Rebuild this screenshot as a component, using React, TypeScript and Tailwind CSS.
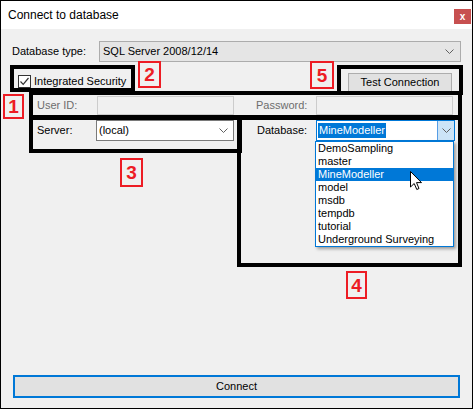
import React from 'react';

const Chevron = () => (
  <svg width="9" height="5" viewBox="0 0 9 5" className="shrink-0">
    <path d="M0.5 0.5 L4.5 4.5 L8.5 0.5" fill="none" stroke="#606060" strokeWidth="1" />
  </svg>
);

const databases = [
  'DemoSampling',
  'master',
  'MineModeller',
  'model',
  'msdb',
  'tempdb',
  'tutorial',
  'Underground Surveying',
];

// annotation overlays drawn over the dialog
const boxes = [
  'left-[9px] top-[64px] w-[125px] h-[27px]',
  'left-[28px] top-[90px] w-[433px] h-[29px]',
  'left-[28px] top-[114px] w-[213px] h-[38px]',
  'left-[236px] top-[114px] w-[225px] h-[152px]',
  'left-[336px] top-[64px] w-[126px] h-[30px]',
];

const labels = [
  { n: '1', pos: 'left-[2px] top-[93px] w-[21px] h-[25px]' },
  { n: '2', pos: 'left-[137px] top-[60px] w-[23px] h-[27px]' },
  { n: '3', pos: 'left-[119px] top-[157px] w-[23px] h-[29px]' },
  { n: '4', pos: 'left-[345px] top-[270px] w-[21px] h-[28px]' },
  { n: '5', pos: 'left-[309px] top-[60px] w-[24px] h-[28px]' },
];

export default function App() {
  return (
    <div className="relative w-[473px] h-[409px] border border-black bg-[#f0f0f0] flex flex-col text-[11px] text-black font-['Liberation_Sans',Arial,sans-serif] overflow-hidden">
      {/* title bar */}
      <div className="h-[28px] bg-white flex items-start justify-between pl-[7px] shrink-0">
        <span className="text-[12px] leading-[14px] mt-[7px]">Connect to database</span>
        <div className="mt-[8px] mr-[1px] w-[17px] h-[15px] bg-[#c75050] text-white flex items-center justify-center text-[10px] font-bold leading-none">
          x
        </div>
      </div>

      <div className="px-[11px] flex flex-col flex-1">
        {/* database type */}
        <div className="mt-[12px] h-[21px] flex items-center">
          <span className="w-[87px] shrink-0">Database type:</span>
          <div className="flex-1 h-[21px] bg-[#e5e5e5] border border-[#acacac] flex items-center justify-between pl-[3px] pr-[6px]">
            <span>SQL Server 2008/12/14</span>
            <Chevron />
          </div>
        </div>

        {/* integrated security / test connection */}
        <div className="mt-[8px] h-[23px] flex items-start">
          <div className="mt-[5px] ml-[6px] flex items-center gap-[3px]">
            <div className="w-[13px] h-[13px] border border-[#333] bg-white flex items-center justify-center">
              <svg width="11" height="11" viewBox="0 0 11 11">
                <path d="M1.5 5.5 L4.2 8.3 L9.5 2" fill="none" stroke="#333" strokeWidth="1.2" />
              </svg>
            </div>
            <span className="leading-[12px] -mt-[1px]">Integrated Security</span>
          </div>
          <div className="ml-auto mr-[9px] mt-[3px] w-[104px] h-[19px] bg-[#e1e1e1] border border-[#adadad] flex items-center justify-center">
            Test Connection
          </div>
        </div>

        {/* credentials + server/database */}
        <div className="mt-[2px] pl-[25px] grid grid-cols-[59px_138px_22px_60px_139px] grid-rows-[20px_21px] gap-y-[5px] items-center">
          <span className="text-[#6d6d6d]">User ID:</span>
          <div className="ml-[1px] w-[137px] h-[19px] border border-[#cccccc] bg-[#f0f0f0]" />
          <span />
          <span className="text-[#6d6d6d]">Password:</span>
          <div className="w-[137px] h-[19px] border border-[#cccccc] bg-[#f0f0f0]" />

          <span>Server:</span>
          <div className="h-[21px] bg-white border border-[#7a7a7a] flex items-center justify-between pl-[2px] pr-[5px]">
            <span>(local)</span>
            <Chevron />
          </div>
          <span />
          <span className="pl-[1px]">Database:</span>
          <div className="h-[21px] bg-white border border-[#0078d7] flex items-stretch justify-between">
            <div className="flex items-center pl-[1px]">
              <span className="bg-[#0078d7] text-white leading-[15px] px-[1px]">MineModeller</span>
            </div>
            <div className="w-[17px] bg-[#cce4f7] border-l border-[#569de5] flex items-center justify-center">
              <Chevron />
            </div>
          </div>
        </div>

        <div className="flex-1" />

        <div className="mx-[1px] mb-[10px] h-[23px] bg-[#e1e1e1] border-2 border-[#0078d7] flex items-center justify-center">
          Connect
        </div>
      </div>

      {/* open dropdown list */}
      <div className="absolute left-[314px] top-[140px] w-[139px] h-[106px] bg-white border border-[#0078d7] shadow-[2px_2px_3px_rgba(0,0,0,0.35)] flex flex-col">
        {databases.map((d) => (
          <div
            key={d}
            className={`h-[13px] leading-[13px] pl-[2px] ${d === 'MineModeller' ? 'bg-[#0078d7] text-white' : ''}`}
          >
            {d}
          </div>
        ))}
      </div>

      {/* mouse pointer */}
      <svg className="absolute left-[409px] top-[170px]" width="13" height="20" viewBox="0 0 13 20">
        <path
          d="M0.5 0.5 L0.5 16 L4.2 12.5 L6.8 18.5 L9 17.5 L6.5 11.6 L11.5 11.6 Z"
          fill="white"
          stroke="black"
          strokeWidth="1"
          strokeLinejoin="round"
        />
      </svg>

      {boxes.map((b) => (
        <div key={b} className={`absolute border-4 border-black ${b}`} />
      ))}

      {labels.map((l) => (
        <div
          key={l.n}
          className={`absolute border-2 border-[#ed1c24] flex items-center justify-center text-[#ed1c24] font-bold text-[19px] leading-none ${l.pos}`}
        >
          {l.n}
        </div>
      ))}
    </div>
  );
}
